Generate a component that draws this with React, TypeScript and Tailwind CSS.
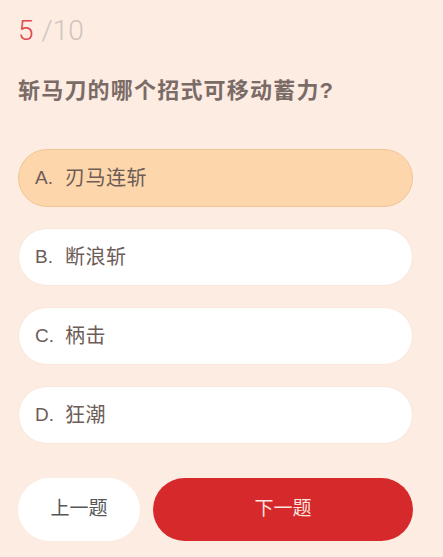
const options = [
  { key: "A", text: "刃马连斩", selected: true },
  { key: "B", text: "断浪斩", selected: false },
  { key: "C", text: "柄击", selected: false },
  { key: "D", text: "狂潮", selected: false },
];

export default function App() {
  return (
    <div className="min-h-[557px] w-[443px] bg-[#fdece2] pl-[18px] pr-[30px] pt-[17px] font-['Liberation_Sans','Noto_Sans_CJK_SC',sans-serif]">
      <div className="flex items-baseline font-['Roboto',sans-serif] text-[28px] leading-[28px] font-light">
        <span className="text-[#e0474d]">5</span>
        <span className="ml-[8px] text-[#cfc4be]">/10</span>
      </div>

      <h1 className="mt-[31px] text-[22px] leading-[30px] font-bold tracking-[1.2px] text-[#7a6b67]">
        斩马刀的哪个招式可移动蓄力?
      </h1>

      <ul className="mt-[43px] flex flex-col gap-[21px]">
        {options.map((o) => (
          <li
            key={o.key}
            className={
              o.selected
                ? "flex h-[58px] items-center rounded-full border border-[#f1c596] bg-[#fdd6ab] pl-[16px] text-[20px] text-[#6e5c57]"
                : "flex h-[58px] items-center rounded-full border border-[#fbe6da] bg-white pl-[16px] text-[20px] text-[#6e5c57]"
            }
          >
            <span className="w-[30px] text-[19px]">{o.key}.</span>
            <span className="tracking-[0.5px]">{o.text}</span>
          </li>
        ))}
      </ul>

      <div className="mt-[34px] flex gap-[13px]">
        <button className="h-[63px] w-[122px] rounded-full bg-white text-[19px] text-[#555]">
          上一题
        </button>
        <button className="h-[63px] flex-1 rounded-full bg-[#d6292b] text-[19px] text-[#fbe3df]">
          下一题
        </button>
      </div>
    </div>
  );
}
